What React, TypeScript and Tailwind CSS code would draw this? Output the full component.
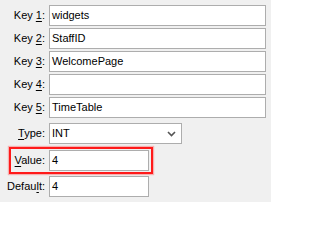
const rows = [
  { pre: "Key ", acc: "1", post: ":", value: "widgets" },
  { pre: "Key ", acc: "2", post: ":", value: "StaffID" },
  { pre: "Key ", acc: "3", post: ":", value: "WelcomePage" },
  { pre: "Key ", acc: "4", post: ":", value: "" },
  { pre: "Key ", acc: "5", post: ":", value: "TimeTable" },
];

const Label = ({ pre, acc, post }: { pre: string; acc: string; post: string }) => (
  <span className="w-[45px] shrink-0 text-right whitespace-pre">
    {pre}
    <span className="underline underline-offset-2">{acc}</span>
    {post}
  </span>
);

const Box = ({ value, width }: { value: string; width: string }) => (
  <div className={`${width} h-[21px] border border-[#adadad] bg-white pl-[2px] flex items-center`}>
    {value}
  </div>
);

export default function App() {
  return (
    <div
      className="w-[271px] h-[202px] bg-[#f0f0f0] text-[11px] text-black pt-[5px]"
      style={{ fontFamily: '"Liberation Sans", Arial, sans-serif' }}
    >
      <div className="flex flex-col gap-[2px]">
        {rows.map((r) => (
          <div key={r.acc} className="flex items-center gap-[4px]">
            <Label pre={r.pre} acc={r.acc} post={r.post} />
            <Box value={r.value} width="w-[217px]" />
          </div>
        ))}
      </div>

      <div className="flex items-center gap-[4px] mt-[5px]">
        <Label pre="" acc="T" post="ype:" />
        <div className="w-[133px] h-[21px] border border-[#adadad] bg-white pl-[2px] pr-[5px] flex items-center justify-between">
          <span>INT</span>
          <svg width="9" height="6" viewBox="0 0 9 6" className="mt-[1px]">
            <polyline points="1,1 4.5,4.5 8,1" fill="none" stroke="#555" strokeWidth="1.6" />
          </svg>
        </div>
      </div>

      <div className="relative flex items-center gap-[4px] mt-[6px]">
        <Label pre="" acc="V" post="alue:" />
        <Box value="4" width="w-[100px]" />
        <span className="pointer-events-none absolute left-[9px] top-[-3px] w-[144px] h-[27px] border-2 border-[#ff1a1a] shadow-[0_0_1px_1px_rgba(255,60,60,0.35)]" />
      </div>

      <div className="flex items-center gap-[4px] mt-[5px]">
        <Label pre="Defau" acc="l" post="t:" />
        <Box value="4" width="w-[100px]" />
      </div>
    </div>
  );
}
